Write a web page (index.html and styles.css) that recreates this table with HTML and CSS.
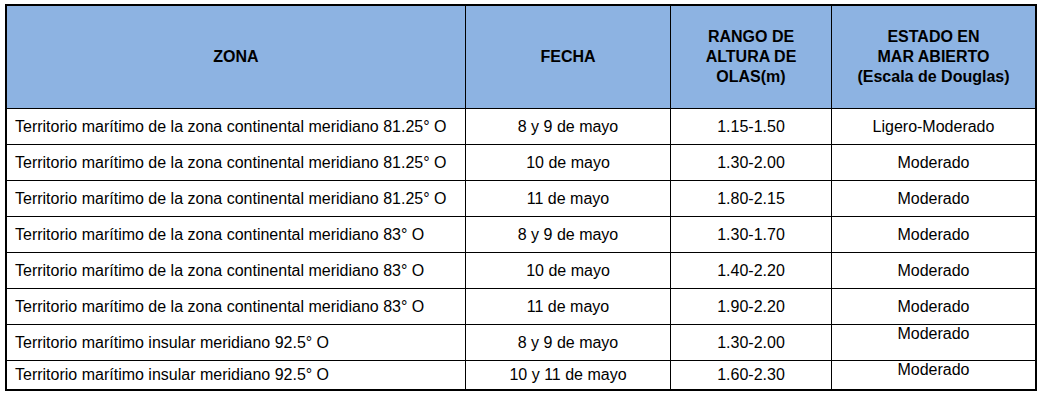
FILE: index.html
```html
<!DOCTYPE html>
<html lang="es">
<head>
<meta charset="utf-8">
<title>Oleaje</title>
<link rel="stylesheet" href="styles.css">
</head>
<body>
<table class="waves">
  <colgroup>
    <col class="c-zona"><col class="c-fecha"><col class="c-rango"><col class="c-estado">
  </colgroup>
  <thead>
    <tr class="head-row">
      <th>ZONA</th>
      <th>FECHA</th>
      <th>RANGO DE<br>ALTURA DE<br>OLAS(m)</th>
      <th>ESTADO EN<br>MAR ABIERTO<br>(Escala de Douglas)</th>
    </tr>
  </thead>
  <tbody>
    <tr><td class="zona">Territorio marítimo de la zona continental meridiano 81.25° O</td><td>8 y 9 de mayo</td><td>1.15-1.50</td><td>Ligero-Moderado</td></tr>
    <tr><td class="zona">Territorio marítimo de la zona continental meridiano 81.25° O</td><td>10 de mayo</td><td>1.30-2.00</td><td>Moderado</td></tr>
    <tr><td class="zona">Territorio marítimo de la zona continental meridiano 81.25° O</td><td>11 de mayo</td><td>1.80-2.15</td><td>Moderado</td></tr>
    <tr><td class="zona">Territorio marítimo de la zona continental meridiano 83° O</td><td>8 y 9 de mayo</td><td>1.30-1.70</td><td>Moderado</td></tr>
    <tr><td class="zona">Territorio marítimo de la zona continental meridiano 83° O</td><td>10 de mayo</td><td>1.40-2.20</td><td>Moderado</td></tr>
    <tr><td class="zona">Territorio marítimo de la zona continental meridiano 83° O</td><td>11 de mayo</td><td>1.90-2.20</td><td>Moderado</td></tr>
    <tr><td class="zona">Territorio marítimo insular meridiano 92.5° O</td><td>8 y 9 de mayo</td><td>1.30-2.00</td><td class="top">Moderado</td></tr>
    <tr class="last"><td class="zona">Territorio marítimo insular meridiano 92.5° O</td><td>10 y 11 de mayo</td><td>1.60-2.30</td><td class="top">Moderado</td></tr>
  </tbody>
</table>
</body>
</html>
```
FILE: styles.css
```css
html, body {
  margin: 0;
  padding: 0;
  background: #fff;
}
body {
  padding: 4px 0 0 5px;
  font-family: "Liberation Sans", Arial, sans-serif;
  font-size: 16px;
  color: #000;
}
.waves {
  border: 2px solid #000;
  border-spacing: 0;
  border-collapse: separate;
  table-layout: fixed;
  width: 1032px;
}
.c-zona { width: 459px; }
.c-fecha { width: 205px; }
.c-rango { width: 161px; }
.c-estado { width: 203px; }
.waves th,
.waves td {
  border-right: 1px solid #000;
  border-bottom: 1px solid #000;
  padding: 0;
  text-align: center;
  vertical-align: middle;
  line-height: 18px;
}
.waves th:last-child,
.waves td:last-child {
  border-right: 0;
}
.waves tr.last td {
  border-bottom: 0;
}
.head-row {
  height: 103px;
}
.waves th {
  background: #8db3e2;
  font-weight: bold;
  line-height: 20px;
}
.waves tbody tr {
  height: 36px;
}
.waves tbody tr.last {
  height: 28px;
}
.waves td.zona {
  text-align: left;
  padding-left: 8px;
}
.waves td.top {
  vertical-align: top;
  padding-top: 0;
}
```
